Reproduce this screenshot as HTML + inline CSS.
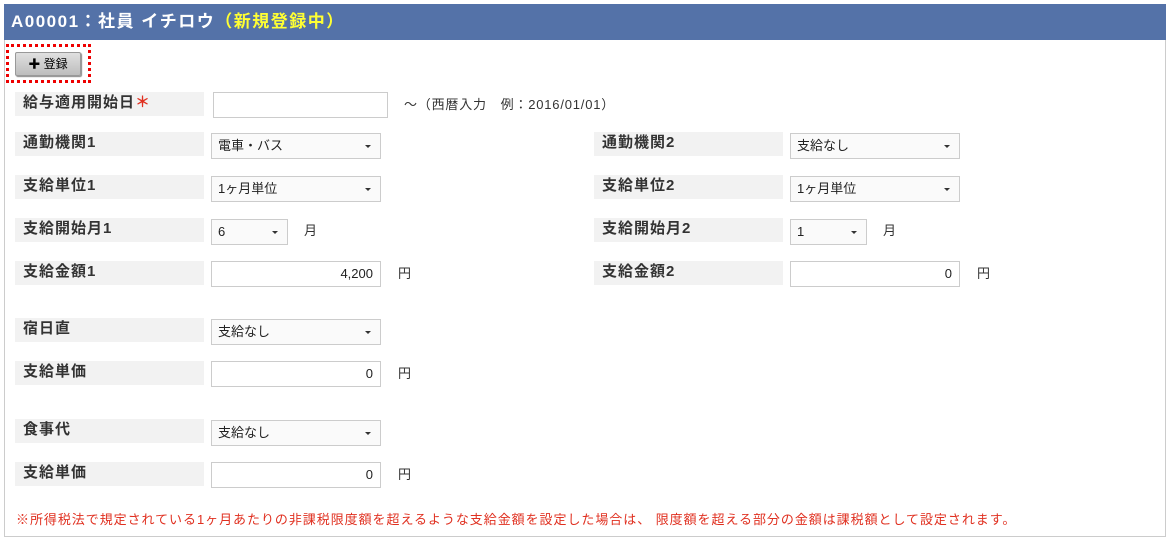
<!DOCTYPE html><html><head><meta charset="utf-8"><style>
body{margin:0;background:#fff;font-family:"Liberation Sans","Noto Sans CJK JP",sans-serif;}
.box{position:absolute;left:4px;top:4px;width:1162px;height:533px;border:1px solid #ccc;box-sizing:border-box;}
.hd{position:absolute;left:4px;top:4px;width:1162px;height:36px;background:#5472a8;color:#fff;font-weight:bold;font-size:17px;letter-spacing:1.5px;line-height:36px;padding-left:7px;box-sizing:border-box;}
.hd span{color:#ffff33}
.dot{position:absolute;left:6px;top:44px;width:85px;height:39px;border:3px dotted #e00;box-sizing:border-box;}
.btn{position:absolute;left:15px;top:52px;width:66px;height:24px;background:linear-gradient(#e0e0e0,#bdbdbd);border:1px solid #999;border-radius:2px;box-shadow:1px 1px 1px #888;box-sizing:border-box;font-size:12px;text-align:center;line-height:22px;}
.l{position:absolute;width:189px;height:24px;background:#f2f2f2;font-weight:bold;font-size:15px;letter-spacing:1px;color:#333;padding-left:8px;box-sizing:border-box;line-height:22px;}
.i{position:absolute;height:26px;border:1px solid #ccc;box-sizing:border-box;background:#fff;font-size:13px;line-height:24px;padding:0 7px;text-align:right;color:#222}
.s{position:absolute;height:26px;border:1px solid #ccc;box-sizing:border-box;background:#fafafa;font-size:13px;line-height:24px;padding:0 6px;color:#222}
.s:after{content:"";position:absolute;right:9px;top:11px;border:3px solid transparent;border-top:3px solid #333;}
.t{position:absolute;font-size:13px;color:#333}
</style></head><body>
<div class="box"></div>
<div class="hd">A00001：社員 イチロウ<span>（新規登録中）</span></div>
<div class="dot"></div>
<div class="btn"><b>✚</b> 登録</div>

<div class="l" style="left:15px;top:92px">給与適用開始日<span style="color:#e03020">＊</span></div>
<div class="i" style="left:213px;top:92px;width:175px"></div>
<div class="t" style="left:404px;top:94px;letter-spacing:0.8px">～（西暦入力　例：2016/01/01）</div>

<div class="l" style="left:15px;top:132px">通勤機関1</div><div class="s" style="left:211px;top:133px;width:170px">電車・バス</div>
<div class="l" style="left:594px;top:132px">通勤機関2</div><div class="s" style="left:790px;top:133px;width:170px">支給なし</div>

<div class="l" style="left:15px;top:175px">支給単位1</div><div class="s" style="left:211px;top:176px;width:170px">1ヶ月単位</div>
<div class="l" style="left:594px;top:175px">支給単位2</div><div class="s" style="left:790px;top:176px;width:170px">1ヶ月単位</div>

<div class="l" style="left:15px;top:218px">支給開始月1</div><div class="s" style="left:211px;top:219px;width:77px">6</div><div class="t" style="left:304px;top:220px">月</div>
<div class="l" style="left:594px;top:218px">支給開始月2</div><div class="s" style="left:790px;top:219px;width:77px">1</div><div class="t" style="left:883px;top:220px">月</div>

<div class="l" style="left:15px;top:261px">支給金額1</div><div class="i" style="left:211px;top:261px;width:170px">4,200</div><div class="t" style="left:398px;top:263px">円</div>
<div class="l" style="left:594px;top:261px">支給金額2</div><div class="i" style="left:790px;top:261px;width:170px">0</div><div class="t" style="left:977px;top:263px">円</div>

<div class="l" style="left:15px;top:318px">宿日直</div><div class="s" style="left:211px;top:319px;width:170px">支給なし</div>
<div class="l" style="left:15px;top:361px">支給単価</div><div class="i" style="left:211px;top:361px;width:170px">0</div><div class="t" style="left:398px;top:363px">円</div>

<div class="l" style="left:15px;top:419px">食事代</div><div class="s" style="left:211px;top:420px;width:170px">支給なし</div>
<div class="l" style="left:15px;top:462px">支給単価</div><div class="i" style="left:211px;top:462px;width:170px">0</div><div class="t" style="left:398px;top:464px">円</div>

<div class="t" style="left:16px;top:509px;color:#e03020;letter-spacing:0.95px;white-space:nowrap">※所得税法で規定されている1ヶ月あたりの非課税限度額を超えるような支給金額を設定した場合は、 限度額を超える部分の金額は課税額として設定されます。</div>
</body></html>
